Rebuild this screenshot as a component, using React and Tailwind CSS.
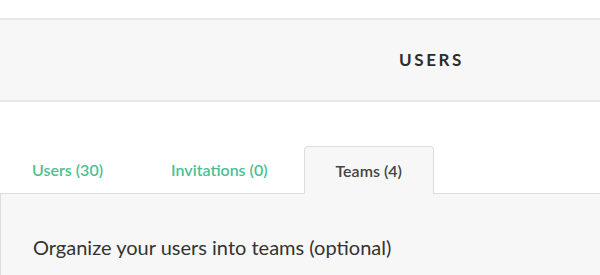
export default function App() {
  const tabs = [
    { label: "Users (30)", active: false },
    { label: "Invitations (0)", active: false },
    { label: "Teams (4)", active: true },
  ];

  return (
    <div className="h-[275px] w-[600px] overflow-hidden bg-white font-['Lato','Liberation_Sans',sans-serif]">
      {/* Header */}
      <div className="mt-[18px] flex h-[84px] items-center border-y-2 border-[#e6e6e6] bg-[#f7f7f7] pl-[399px]">
        <h1 className="text-[17px] font-bold tracking-[2.6px] text-[#2d2d2d]">USERS</h1>
      </div>

      {/* Tabs */}
      <div className="mt-[44px] flex h-[48px] items-end border-b border-[#dddddd]">
        {tabs.map((t) => (
          <div
            key={t.label}
            className={
              t.active
                ? "-mb-px mr-[4px] flex h-[48px] items-center rounded-t-[4px] border border-b-0 border-[#dddddd] bg-[#f7f7f7] px-[31px] text-[16px] font-semibold text-[#444444]"
                : "mr-[4px] flex h-[47px] items-center px-[32px] text-[16px] font-semibold text-[#4cbf92]"
            }
          >
            {t.label}
          </div>
        ))}
      </div>

      {/* Panel */}
      <div className="h-[100px] border-l border-[#dddddd] bg-[#f7f7f7] px-[32px] pt-[41px]">
        <p className="text-[20px] leading-[24px] text-[#333333]">Organize your users into teams (optional)</p>
      </div>
    </div>
  );
}
